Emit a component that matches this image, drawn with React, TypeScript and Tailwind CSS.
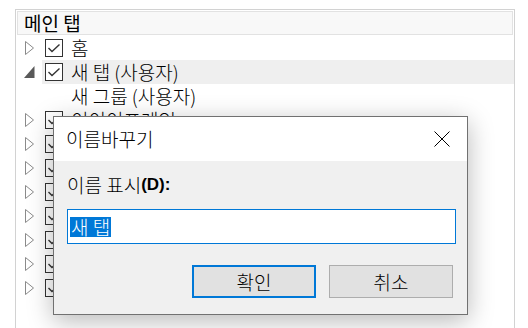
const font = { fontFamily: '"Noto Sans CJK KR", "Noto Sans", sans-serif' };

function Collapsed() {
  return (
    <svg width="11" height="14" viewBox="0 0 11 14" className="shrink-0">
      <path d="M1.5 0.5 L9.5 7 L1.5 13.5 Z" fill="none" stroke="#8a8a8a" strokeWidth="1" />
    </svg>
  );
}

function Expanded() {
  return (
    <svg width="11" height="14" viewBox="0 0 11 14" className="shrink-0">
      <path d="M10.5 1 L10.5 13 L0 13 Z" fill="#595959" />
    </svg>
  );
}

function Check() {
  return (
    <div className="w-[18px] h-[18px] border border-[#333] bg-white flex items-center justify-center shrink-0">
      <svg width="14" height="11" viewBox="0 0 14 11">
        <path d="M1.5 5 L5 8.5 L12.5 1.5" fill="none" stroke="#333" strokeWidth="1.4" />
      </svg>
    </div>
  );
}

// rows under the dialog: only the first label peeks out above it
const collapsedRows = ['이이이프레임', '', '', '', '', '', '', ''];

function Row({ label, kind, highlight }: { label: string; kind: 'open' | 'closed' | 'child'; highlight?: boolean }) {
  return (
    <div className="h-[24px] flex items-center">
      <div className="w-[26px] pl-[8px] flex items-center">
        {kind === 'open' && <Expanded />}
        {kind === 'closed' && <Collapsed />}
      </div>
      <div className={`flex-1 h-full flex items-center gap-[8px] pl-[3px] ${highlight ? 'bg-[#efefef]' : ''}`}>
        {kind !== 'child' ? <Check /> : <div className="w-[18px]" />}
        <span className="text-[19px] leading-[20px] font-light text-black whitespace-nowrap">{label}</span>
      </div>
    </div>
  );
}

export default function App() {
  return (
    <div className="w-[528px] h-[328px] bg-white relative overflow-hidden" style={font}>
      {/* Ribbon tabs tree */}
      <div className="ml-[15px] mt-[9px] w-[500px] h-[330px] border-l border-t border-r border-[#d2d2d2]">
        <div className="mx-[1px] mt-[1px] h-[24px] bg-[#f8f8f8] border border-[#e2e2e2] flex items-center pl-[6px]">
          <span className="text-[19px] leading-[20px] text-black">메인 탭</span>
        </div>
        <div className="mt-[1px]">
          <Row label="홈" kind="closed" />
          <Row label="새 탭 (사용자)" kind="open" highlight />
          <Row label="새 그룹 (사용자)" kind="child" />
          {collapsedRows.map((r, i) => (
            <Row key={i} label={r} kind="closed" />
          ))}
        </div>
      </div>

      {/* Rename dialog */}
      <div className="absolute left-[53px] top-[116px] w-[415px] h-[199px] border border-[#717171] bg-[#f0f0f0] shadow-[0_6px_24px_rgba(0,0,0,0.28)] flex flex-col">
        <div className="h-[44px] bg-white flex items-center justify-between pl-[12px] pr-[17px]">
          <span className="text-[19px] leading-[20px] font-light text-black">이름바꾸기</span>
          <svg width="16" height="16" viewBox="0 0 16 16">
            <path d="M0.5 0.5 L15.5 15.5 M15.5 0.5 L0.5 15.5" stroke="#000" strokeWidth="1" />
          </svg>
        </div>
        <div className="flex-1 px-[13px] pt-[14px] flex flex-col">
          <div className="h-[20px] flex items-center text-[19px] leading-[20px] font-light text-black">
            이름 표시
            <span className="font-bold text-[17px]" style={{ fontFamily: '"Liberation Sans", sans-serif' }}>(D):</span>
          </div>
          <div className="mt-[14px] h-[35px] w-[389px] border border-[#0078d7] bg-white flex items-center pl-[2px]">
            <span className="bg-[#0078d7] text-white text-[19px] font-light leading-[20px] h-[20px] px-[1px]">새 탭</span>
          </div>
          <div className="mt-[21px] flex justify-end gap-[13px] pr-[1px]">
            <button className="w-[124px] h-[33px] border-2 border-[#0078d7] bg-[#e1e1e1] text-[19px] font-light leading-none text-black">
              확인
            </button>
            <button className="w-[124px] h-[33px] border border-[#adadad] bg-[#e1e1e1] text-[19px] font-light leading-none text-black">
              취소
            </button>
          </div>
        </div>
      </div>
    </div>
  );
}
